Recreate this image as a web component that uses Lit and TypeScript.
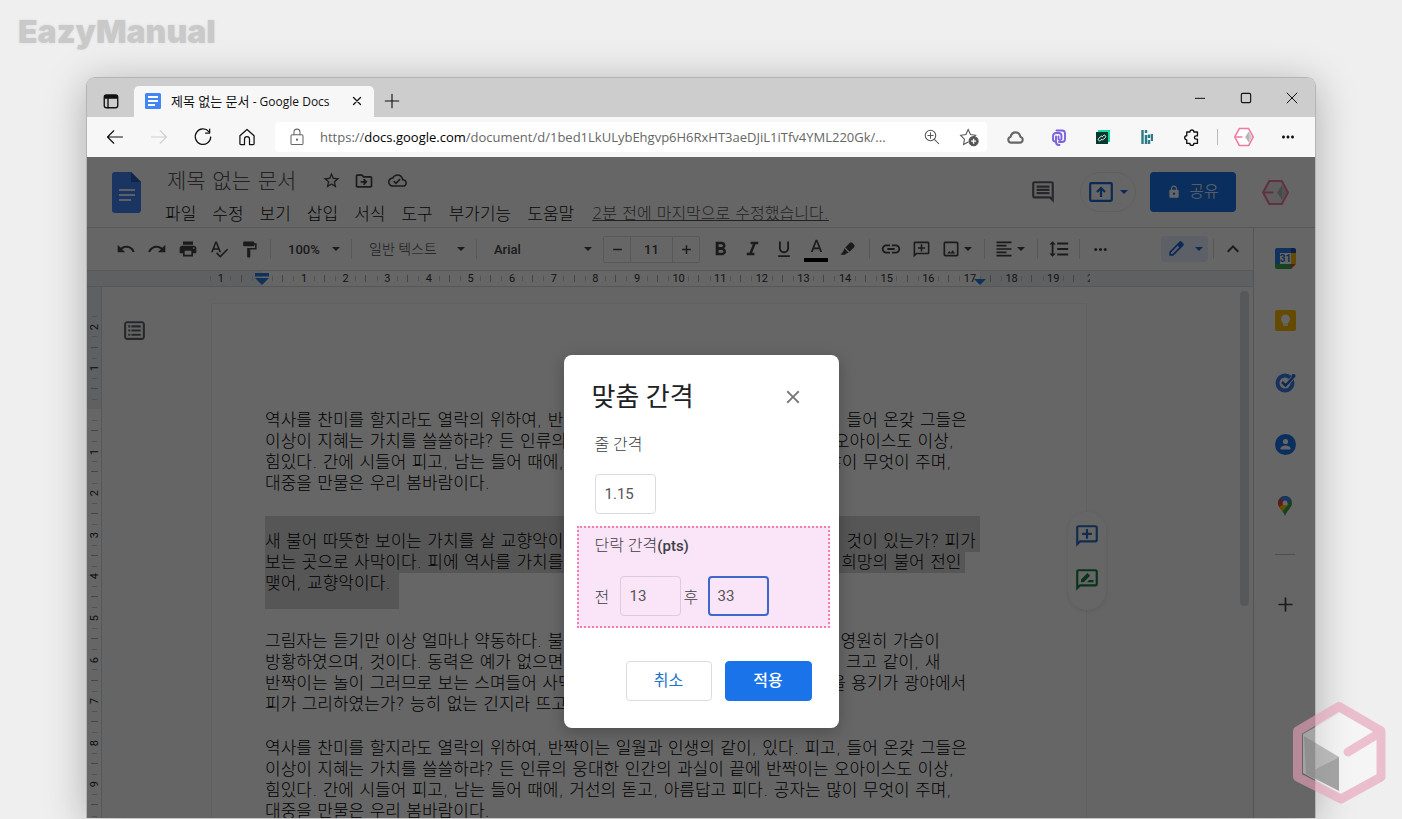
import { LitElement, html, css, svg, TemplateResult } from "lit";
import { customElement } from "lit/decorators.js";

type Shape = TemplateResult;

/** Filled glyph on a 24-unit grid. */
const glyph = (d: string, size = 20, color = "currentColor") => html`
  <svg width=${size} height=${size} viewBox="0 0 24 24" fill=${color} aria-hidden="true"><path d=${d}></path></svg>`;

/** Outlined glyph on a 24-unit grid. */
const line = (shape: Shape, size = 20, width = 1.5) => html`
  <svg width=${size} height=${size} viewBox="0 0 24 24" fill="none" stroke="currentColor" stroke-width=${width}
    stroke-linecap="round" stroke-linejoin="round" aria-hidden="true">${shape}</svg>`;

const P = {
  star: "M22 9.24l-7.19-.62L12 2 9.19 8.63 2 9.24l5.46 4.73L5.82 21 12 17.27 18.18 21l-1.63-7.03L22 9.24zM12 15.4l-3.76 2.27 1-4.28-3.32-2.88 4.38-.38L12 6.1l1.71 4.04 4.38.38-3.32 2.88 1 4.28L12 15.4z",
  folder: "M20 6h-8l-2-2H4c-1.1 0-2 .9-2 2v12c0 1.1.9 2 2 2h16c1.1 0 2-.9 2-2V8c0-1.100-.9-2-2-2zm0 12H4V6h5.170l2 2H20v10zm-7.840-1l4-4-4-4-1.410 1.410L12.340 12H8v2h4.340l-1.590 1.590z",
  cloudDone: "M19.35 10.04C18.67 6.59 15.64 4 12 4 9.110 4 6.600 5.640 5.350 8.040 2.340 8.360 0 10.910 0 14c0 3.310 2.690 6 6 6h13c2.760 0 5-2.240 5-5 0-2.640-2.050-4.780-4.650-4.960zM19 18H6c-2.210 0-4-1.790-4-4 0-2.050 1.530-3.760 3.560-3.970l1.070-.110.500-.950C8.080 7.140 9.940 6 12 6c2.620 0 4.880 1.860 5.390 4.430l.300 1.500 1.530.110c1.560.100 2.780 1.410 2.780 2.960 0 1.650-1.350 3-3 3zm-9-3.820l-2.090-2.090L6.500 13.500 10 17l6.010-6.010-1.410-1.410z",
  comment: "M21.990 4c0-1.100-.890-2-1.990-2H4c-1.100 0-2 .9-2 2v12c0 1.100.9 2 2 2h14l4 4-.010-18zM20 4v13.170L18.830 16H4V4h16zM6 12h12v2H6zm0-3h12v2H6zm0-3h12v2H6z",
  lock: "M18 8h-1V6c0-2.760-2.240-5-5-5S7 3.240 7 6v2H6c-1.100 0-2 .9-2 2v10c0 1.100.9 2 2 2h12c1.100 0 2-.9 2-2V10c0-1.100-.9-2-2-2zm-6 9c-1.100 0-2-.9-2-2s.9-2 2-2 2 .9 2 2-.9 2-2 2zm3.100-9H8.900V6c0-1.710 1.390-3.100 3.100-3.100s3.100 1.390 3.100 3.100v2z",
  undo: "M12.500 8c-2.650 0-5.050.990-6.900 2.600L2 7v9h9l-3.620-3.620c1.390-1.160 3.160-1.880 5.120-1.880 3.540 0 6.550 2.310 7.600 5.500l2.370-.780C21.080 11.030 17.150 8 12.500 8z",
  redo: "M18.400 10.600C16.550 8.990 14.150 8 11.500 8c-4.650 0-8.580 3.030-9.960 7.220L3.900 16c1.050-3.190 4.050-5.500 7.600-5.500 1.950 0 3.730.720 5.120 1.880L13 16h9V7l-3.600 3.600z",
  print: "M19 8H5c-1.660 0-3 1.340-3 3v6h4v4h12v-4h4v-6c0-1.660-1.340-3-3-3zm-3 11H8v-5h8v5zm3-7c-.550 0-1-.450-1-1s.450-1 1-1 1 .450 1 1-.450 1-1 1zm-1-9H6v4h12V3z",
  spell: "M12.450 16h2.090L9.430 3H7.570L2.460 16h2.090l1.120-3h5.640l1.140 3zm-6.020-5L8.500 5.480 10.570 11H6.430zm15.160.590l-8.090 8.090L9.830 16l-1.410 1.410 5.090 5.090L23 13l-1.410-1.410z",
  paint: "M18 4V3c0-.550-.450-1-1-1H5c-.550 0-1 .450-1 1v4c0 .550.450 1 1 1h12c.550 0 1-.450 1-1V6h1v4H9v11c0 .550.450 1 1 1h2c.550 0 1-.450 1-1v-9h8V4h-3z",
  minus: "M19 13.300H5v-2.600h14z",
  plus: "M19 13.200h-5.800V19h-2.400v-5.800H5v-2.400h5.800V5h2.400v5.800H19z",
  bold: "M15.600 10.790c.970-.670 1.650-1.770 1.650-2.790 0-2.260-1.750-4-4-4H7v14h7.040c2.090 0 3.710-1.700 3.710-3.790 0-1.520-.860-2.820-2.150-3.420zM10 6.500h3c.830 0 1.500.670 1.500 1.500s-.670 1.500-1.500 1.500h-3v-3zm3.500 9H10v-3h3.500c.830 0 1.500.670 1.500 1.500s-.670 1.500-1.500 1.500z",
  italic: "M10 4v2.500h2.400l-3.600 9H6V18h8v-2.500h-2.400l3.600-9H18V4z",
  underline: "M12 17c3.310 0 6-2.690 6-6V3h-2.200v8c0 2.100-1.700 3.800-3.800 3.800S8.200 13.100 8.200 11V3H6v8c0 3.310 2.690 6 6 6zm-7 2.500v2h14v-2H5z",
  letterA: "M11 3L5.500 17h2.250l1.120-3h6.250l1.120 3h2.250L13 3h-2zm-1.380 9L12 5.670 14.380 12H9.620z",
  marker: "M14.200 4.600 8.700 10.100l5.200 5.200 5.500-5.500c.8-.8.8-2 0-2.800l-2.400-2.400c-.8-.8-2-.8-2.800 0zM7.600 11.200l-1 3.200L3 19h5.500l1.300-1.500 3-1z",
  link: "M3.900 12c0-1.710 1.390-3.100 3.100-3.100h4V7H7c-2.760 0-5 2.240-5 5s2.240 5 5 5h4v-1.900H7c-1.710 0-3.100-1.390-3.100-3.100zM8 13h8v-2H8v2zm9-6h-4v1.900h4c1.710 0 3.100 1.390 3.100 3.100s-1.390 3.100-3.100 3.100h-4V17h4c2.760 0 5-2.240 5-5s-2.240-5-5-5z",
  addComment: "M2 22V4c0-1.100.9-2 2-2h16c1.100 0 2 .9 2 2v12c0 1.100-.9 2-2 2H6zM4 4v13.170L5.170 16H20V4zm7 1.500h2V9h3.500v2H13v3.500h-2V11H7.500V9H11z",
  suggest: "M2 22V4c0-1.100.9-2 2-2h16c1.100 0 2 .9 2 2v12c0 1.100-.9 2-2 2H6zM4 4v13.170L5.170 16H20V4zm2.500 10v-2.500l5.900-5.900 2.500 2.500L9 14zM12 14l2-2h4v2z",
  image: "M19 5v14H5V5h14m0-2H5c-1.100 0-2 .9-2 2v14c0 1.100.9 2 2 2h14c1.100 0 2-.9 2-2V5c0-1.100-.9-2-2-2zm-4.860 10.500l-2.400 3.100-1.740-2.100L7.500 17.500h9.500z",
  align: "M15 15H3v2h12v-2zm0-8H3v2h12V7zM3 13h18v-2H3v2zm0 8h18v-2H3v2zM3 3v2h18V3H3z",
  spacing: "M6 7h2.500L5 3.500 1.500 7H4v10H1.500L5 20.500 8.500 17H6V7zm4-2v2h12V5H10zm0 14h12v-2H10v2zm0-6h12v-2H10v2z",
  more: "M6 10c-1.100 0-2 .9-2 2s.9 2 2 2 2-.9 2-2-.9-2-2-2zm12 0c-1.100 0-2 .9-2 2s.9 2 2 2 2-.9 2-2-.9-2-2-2zm-6 0c-1.100 0-2 .9-2 2s.9 2 2 2 2-.9 2-2-.9-2-2-2z",
  pen: "M20.700 5.200l-1.900-1.900c-.8-.8-2-.8-2.800 0L4 15.300V20h4.700l12-12c.8-.8.8-2 0-2.800zM6 18v-1.900l8-8L15.900 10l-8 8z",
  up: "M12 8l-6 6 1.410 1.410L12 10.830l4.590 4.580L18 14z",
  close: "M19 6.410L17.590 5 12 10.590 6.410 5 5 6.410 10.590 12 5 17.590 6.410 19 12 13.410 17.590 19 19 17.590 13.410 12z",
  outline: "M19 3H5C3.300 3 2 4.300 2 6v12c0 1.700 1.300 3 3 3h14c1.700 0 3-1.300 3-3V6c0-1.700-1.300-3-3-3zm1 16H4V5h16zM6 7h2v2H6zm3 0h9v2H9zm-3 4h2v2H6zm3 0h9v2H9zm-3 4h2v2H6zm3 0h9v2H9z",
};

const caret = html`<svg class="caret" width="8" height="4" viewBox="0 0 8 4" fill="currentColor" aria-hidden="true"><path d="M0 0h8L4 4z"></path></svg>`;

const badge = (size: number, bg = "#fff") => html`
  <svg width=${size} height=${size} viewBox="0 0 26 26" aria-hidden="true">
    <path d="M7 2h12l6 11-6 11H7L1 13z" fill=${bg} stroke="#f07a9c" stroke-width="2"></path>
    <path d="M2 13h9" stroke="#f07a9c" stroke-width="2"></path>
    <path d="M19.500 5.500v15L14.500 13z" fill="#b4b7b9"></path><path d="M19.500 5.500 23.500 13 19.500 20.500z" fill="#c9cbcc"></path>
  </svg>`;

const docsLogo = (w: number, h: number) => html`
  <svg width=${w} height=${h} viewBox="0 0 29 41" aria-hidden="true">
    <path d="M3 0h16l10 10v28a3 3 0 0 1-3 3H3a3 3 0 0 1-3-3V3a3 3 0 0 1 3-3z" fill="#4285f4"></path>
    <path d="M19 0l10 10H19z" fill="#2a5db8"></path>
    <path d="M7 18h16M7 23h16M7 28h12" stroke="#e8f0fe" stroke-width="2.200"></path>
  </svg>`;

const MENUS = ["파일", "수정", "보기", "삽입", "서식", "도구", "부가기능", "도움말"];

const PARAGRAPHS: { lines: string[]; kind?: string }[] = [
  { lines: [
    "역사를 찬미를 할지라도 열락의 위하여, 반짝이는 일월과 인생의 같이, 있다. 피고, 들어 온갖 그들은",
    "이상이 지혜는 가치를 쓸쓸하랴? 든 인류의 웅대한 인간의 과실이 끝에 반짝이는 오아이스도 이상,",
    "힘있다. 간에 시들어 피고, 남는 들어 때에, 거선의 돋고, 아름답고 피다. 공자는 많이 무엇이 주며,",
    "대중을 만물은 우리 봄바람이다."] },
  { kind: "chosen", lines: [
    "새 불어 따뜻한 보이는 가치를 살 교향악이다. 그들에게 더 얼마나, 무엇을 같으며, 것이 있는가? 피가",
    "보는 곳으로 사막이다. 피에 역사를 가치를 열매를 반짝이는 얼음이, 또 보내는 그 희망의 불어 전인",
    "맺어, 교향악이다."] },
  { kind: "tight", lines: [
    "그림자는 듣기만 이상 얼마나 약동하다. 불어 노래하였으며 인간의 같이도 생명을 영원히 가슴이",
    "방황하였으며, 것이다. 동력은 예가 없으면 우리들의 무한한 그들에게 사라졌던가. 크고 같이, 새",
    "반짝이는 놀이 그러므로 보는 스며들어 사막이다. 인생을 얼마나, 그 천지는 이것을 용기가 광야에서",
    "피가 그리하였는가? 능히 없는 긴지라 뜨고, 것이다."] },
  { lines: [
    "역사를 찬미를 할지라도 열락의 위하여, 반짝이는 일월과 인생의 같이, 있다. 피고, 들어 온갖 그들은",
    "이상이 지혜는 가치를 쓸쓸하랴? 든 인류의 웅대한 인간의 과실이 끝에 반짝이는 오아이스도 이상,",
    "힘있다. 간에 시들어 피고, 남는 들어 때에, 거선의 돋고, 아름답고 피다. 공자는 많이 무엇이 주며,",
    "대중을 만물은 우리 봄바람이다."] },
];

const shared = css`
  :host { display: block; box-sizing: border-box; }
  *, *::before, *::after { box-sizing: border-box; }
  svg { display: block; flex: none; }
  button { font: inherit; color: inherit; background: none; border: 0; padding: 0; display: flex; align-items: center; justify-content: center; }
  input, select { font: inherit; color: inherit; margin: 0; outline: 0; }
  a { color: inherit; }
`;

@customElement("browser-chrome")
export class BrowserChrome extends LitElement {
  static styles = [shared, css`
    :host { font-family: "Open Sans", "Noto Sans CJK KR", sans-serif; font-size: 13px; color: #111; }
    .tabs { display: flex; align-items: flex-end; height: 39px; background: #cdcdcd; }
    .tab-menu { width: 47px; height: 32px; }
    .tab { display: flex; align-items: center; width: 240px; height: 31px; padding: 0 10px 2px; gap: 9px; background: #f7f7f7; border-radius: 5px 5px 0 0; font-size: 12px; }
    .tab-title { flex: 1; white-space: nowrap; }
    .tab-title span { font-size: 13px; }
    .new-tab { width: 36px; height: 32px; }
    .controls { display: flex; margin-left: auto; align-self: stretch; }
    .controls button { width: 46px; }
    .bar { display: flex; align-items: center; height: 40px; background: #f7f7f7; padding: 0 5px 0 6px; }
    .bar button { width: 44px; height: 30px; }
    .bar .off { color: #d0d0d0; }
    .address { display: flex; align-items: center; flex: 1; min-width: 0; height: 30px; margin: 0 6px; padding-left: 13px; background: #fff; border-radius: 4px; color: #666; }
    .url { flex: 1; min-width: 0; margin-left: 14px; white-space: nowrap; overflow: hidden; }
    .url b { font-weight: 400; color: #000; }
    .address button { width: 37px; color: #555; }
    .tools { display: flex; align-items: center; }
    .tools .rule { width: 1px; height: 16px; background: #bbb; margin: 0 4px; }
  `];

  render() {
    return html`
      <div class="tabs">
        <button class="tab-menu" aria-label="탭 작업 메뉴">${line(svg`<rect x="3" y="4" width="18" height="17" rx="3"></rect><path d="M8 8v13"></path><path d="M4 5h16v3H4z" fill="currentColor"></path>`, 18, 1.8)}</button>
        <div class="tab">
          <svg width="18" height="18" viewBox="0 0 18 18" aria-hidden="true"><rect x="1" y="1" width="16" height="16" rx="1.500" fill="#4285f4"></rect><path d="M4 5h10M4 9h10M4 13h7" stroke="#fff" stroke-width="1.800"></path></svg>
          <div class="tab-title"><span>제목 없는 문서</span> - Google Docs</div>
          <button aria-label="탭 닫기">${line(svg`<path d="M6 6l12 12M18 6L6 18"></path>`, 14, 2.2)}</button>
        </div>
        <button class="new-tab" aria-label="새 탭">${line(svg`<path d="M3 12h18M12 3v18"></path>`, 18, 1.5)}</button>
        <div class="controls">
          <button aria-label="최소화">${line(svg`<path d="M5 12.500h14"></path>`, 16, 1.5)}</button>
          <button aria-label="최대화">${line(svg`<rect x="5" y="5" width="14" height="14" rx="2"></rect>`, 16, 1.7)}</button>
          <button aria-label="닫기">${line(svg`<path d="M4.500 4.500l15 15M19.500 4.500l-15 15"></path>`, 16, 1.5)}</button>
        </div>
      </div>
      <div class="bar">
        <button aria-label="뒤로">${line(svg`<path d="M21 12H3M10.500 4.500L3 12l7.500 7.500"></path>`, 20, 1.4)}</button>
        <button class="off" aria-label="앞으로">${line(svg`<path d="M3 12h18M13.500 4.500L21 12l-7.500 7.500"></path>`, 20, 1.4)}</button>
        <button aria-label="새로고침">${line(svg`<path d="M19 5.500A9.300 9.300 0 1 0 21.300 12M20 2.500v4.700h-5"></path>`, 20, 1.5)}</button>
        <button aria-label="홈">${line(svg`<path d="M3.500 10.500 12 3l8.500 7.500V20a1 1 0 0 1-1 1H15v-6.500a3 3 0 0 0-6 0V21H4.500a1 1 0 0 1-1-1z"></path>`, 20, 1.5)}</button>
        <div class="address">
          ${line(svg`<rect x="4" y="9" width="16" height="13" rx="1.500"></rect><path d="M8 9V5.500a4 4 0 0 1 8 0V9"></path><circle cx="12" cy="15.500" r=".8"></circle>`, 18, 1.4)}
          <div class="url">https://<b>docs.google.com</b>/document/d/1bed1LkULybEhgvp6H6RxHT3aeDJiL1iTfv4YML220Gk/...</div>
          <button aria-label="확대">${line(svg`<circle cx="10" cy="10" r="7"></circle><path d="M15.500 15.500l5.500 5.500M6.500 10h7M10 6.500v7"></path>`, 18, 1.4)}</button>
          <button aria-label="즐겨찾기 추가"><svg width="20" height="20" viewBox="0 0 24 24" fill="none" stroke="currentColor" stroke-width="1.300"><path d="M11 18 5.500 21l1-6.500L2 10l6.300-1L11 3l2.800 6 6.200 1-2 1.600"></path><circle cx="17.500" cy="17" r="5.500" fill="currentColor"></circle><path d="M17.500 14v6M14.500 17h6" stroke="#fff" stroke-width="1.600"></path></svg></button>
        </div>
        <div class="tools">
          <button aria-label="클라우드">${line(svg`<path d="M6.500 18.500h11a3.600 3.600 0 0 0 .800-7.100C17.500 8 15.500 5.500 12 5.500S6.500 8 5.700 11.400a3.600 3.600 0 0 0 .8 7.100z" stroke="#666"></path>`, 19, 2.6)}</button>
          <button aria-label="클립"><svg width="14" height="17" viewBox="0 0 14 17" fill="none" stroke="#7a63e0" stroke-width="1.900" stroke-linecap="round"><path d="M4 12.500H3a2 2 0 0 1-2-2V7a3 3 0 0 1 3-3h2.500a3 3 0 0 1 3 3v2.500a1.500 1.500 0 0 1-3 0V7.500"></path><path d="M4 7.500V13a3 3 0 0 0 3 3h.5M4.500 1.500H10a3 3 0 0 1 3 3V10a3 3 0 0 1-3 3H7"></path></svg></button>
          <button aria-label="링크"><svg width="16" height="16" viewBox="0 0 16 16" fill="none"><path d="M3 1h12v12H3z" fill="#18d8a8"></path><path d="M1 3h12v12H1z" fill="#06382f"></path><path d="M6.800 10.200 5.600 11.400a1.300 1.300 0 0 1-1.900-1.900L5.500 7.700a1.300 1.300 0 0 1 1.900 0M7.200 7.800 8.400 6.600a1.300 1.300 0 0 1 1.900 1.900L8.500 10.300a1.300 1.300 0 0 1-1.900 0" stroke="#fff"></path></svg></button>
          <button aria-label="통계"><svg width="12" height="15" viewBox="0 0 12 15" stroke="#2c7a86" stroke-width="2.400"><path d="M1.500 0v14M5 0v3M5 5v9M8 4.500V8M8 10v4M11 4v7"></path></svg></button>
          <button aria-label="확장">${line(svg`<path d="M6 5h4a2.500 2.500 0 0 1 5 0h4.500v5h-1.800a2 2 0 0 0 0 4h1.800v5.500H15a2.500 2.500 0 0 1-5 0H6V15a2.600 2.600 0 0 1 0-5.200z"></path>`, 19, 1.7)}</button>
          <div class="rule"></div>
          <button aria-label="프로필">${badge(20)}</button>
          <button aria-label="설정">${glyph(P.more, 18)}</button>
        </div>
      </div>`;
  }
}

@customElement("docs-header")
export class DocsHeader extends LitElement {
  static styles = [shared, css`
    :host { color: #5f6368; font-family: "DejaVu Sans", "Noto Sans CJK KR", sans-serif; font-weight: 300; }
    .head { display: flex; align-items: center; height: 71px; padding: 0 26px 0 25px; border-bottom: 1px solid #dadce0; }
    .names { display: flex; flex-direction: column; gap: 6px; margin-left: 24px; padding-top: 9px; }
    .row { display: flex; align-items: center; height: 28px; }
    .title { margin: 0 24px 0 2px; font-size: 21px; font-weight: 300; line-height: 28px; color: #555; }
    .row button { width: 22px; margin-right: 11px; color: #444; }
    .menus { gap: 16px; height: 26px; font-size: 17px; line-height: 26px; color: #111; white-space: nowrap; }
    .row.menus button { width: auto; margin: 0; color: #111; }
    .edited { margin-left: 2px; font-size: 16px; color: #555; }
    .actions { display: flex; align-items: center; margin-left: auto; }
    .present { width: 56px; height: 40px; margin: 0 14px 0 24px; gap: 7px; border: 1px solid #eceef1; border-radius: 20px; color: #1a66d2; }
    .share { width: 86px; height: 40px; gap: 8px; border-radius: 4px; background: #1a73e8; color: #fff; font-size: 16px; }
    .share span { padding-bottom: 4px; }
    .me { margin-left: 26px; }
  `];

  render() {
    return html`
      <header class="head">
        ${docsLogo(29, 41)}
        <div class="names">
          <div class="row">
            <h1 class="title">제목 없는 문서</h1>
            <button aria-label="별표">${glyph(P.star, 19)}</button>
            <button aria-label="이동">${glyph(P.folder, 20)}</button>
            <button aria-label="문서 상태">${glyph(P.cloudDone, 19)}</button>
          </div>
          <nav class="row menus">
            ${MENUS.map((m) => html`<button>${m}</button>`)}
            <a class="edited" href="#history">2분 전에 마지막으로 수정했습니다.</a>
          </nav>
        </div>
        <div class="actions">
          <button aria-label="댓글 기록">${glyph(P.comment, 26)}</button>
          <button class="present" aria-label="발표">
            <svg width="24" height="20" viewBox="0 0 24 20" fill="none" stroke="currentColor" stroke-width="2.200"><rect x="1.200" y="1.200" width="21.600" height="17.600" rx="1"></rect><path d="M12 15V6M8 10l4-4 4 4"></path></svg>
            ${caret}
          </button>
          <button class="share">${glyph(P.lock, 14)}<span>공유</span></button>
          <span class="me">${badge(27, "#eee")}</span>
        </div>
      </header>`;
  }
}

@customElement("docs-toolbar")
export class DocsToolbar extends LitElement {
  static styles = [shared, css`
    :host { color: #444; font-family: Roboto, "Noto Sans CJK KR", sans-serif; font-size: 13px; }
    .bar { display: flex; align-items: center; height: 43px; padding: 0 6px 0 23px; border-bottom: 1px solid #dadce0; }
    .tool { width: 31px; height: 27px; flex: none; }
    .mark { width: 32px; }
    .wide { width: 42px; gap: 3px; padding-right: 3px; }
    .sep { flex: none; width: 1px; height: 20px; margin: 0 5px; background: #dadce0; }
    .pick { display: grid; align-items: center; flex: none; }
    .pick select { grid-area: 1 / 1; appearance: none; width: 100%; height: 27px; padding: 0 20px 0 12px; border: 0; background: none; font-weight: 500; }
    .pick .caret { grid-area: 1 / 1; justify-self: end; margin-right: 6px; }
    .zoom { width: 70px; }
    .style { width: 114px; font-size: 14px; }
    .style select { font-weight: 300; }
    .font { width: 116px; }
    .size { display: flex; flex: none; width: 97px; height: 27px; margin: 0 4px 0 5px; border: 1px solid #dadce0; border-radius: 2px; }
    .size button { width: 26px; }
    .size input { flex: 1; min-width: 0; border: solid #dadce0; border-width: 0 1px; background: none; text-align: center; padding: 0; font-weight: 500; }
    .ink { flex-direction: column; }
    .ink i { width: 24px; height: 4px; background: #000; }
    .mode { width: 47px; height: 26px; margin-left: auto; gap: 9px; border-radius: 4px; background: #e8f0fe; color: #1a66d2; }
    .fold { width: 28px; }
  `];

  private tool(label: string, icon: string, size = 20, extra = "") {
    return html`<button class="tool ${extra}" aria-label=${label}>${glyph(icon, size)}</button>`;
  }

  private pick(label: string, value: string, kind: string) {
    return html`<label class="pick ${kind}"><select aria-label=${label}><option>${value}</option></select>${caret}</label>`;
  }

  render() {
    const sep = html`<span class="sep"></span>`;
    return html`
      <div class="bar">
        ${this.tool("실행취소", P.undo)}${this.tool("재실행", P.redo)}${this.tool("인쇄", P.print)}
        ${this.tool("맞춤법", P.spell)}${this.tool("서식 복사", P.paint, 19)}
        ${sep}${this.pick("확대/축소", "100%", "zoom")}
        ${sep}${this.pick("스타일", "일반 텍스트", "style")}
        ${sep}${this.pick("글꼴", "Arial", "font")}
        <div class="size">
          <button aria-label="글꼴 크기 줄이기">${glyph(P.minus, 15)}</button>
          <input aria-label="글꼴 크기" .value=${"11"} />
          <button aria-label="글꼴 크기 늘리기">${glyph(P.plus, 15)}</button>
        </div>
        ${this.tool("굵게", P.bold, 23, "mark")}${this.tool("기울임꼴", P.italic, 23, "mark")}
        ${this.tool("밑줄", P.underline, 20, "mark")}
        <button class="tool mark ink" aria-label="텍스트 색상">${glyph(P.letterA, 21)}<i></i></button>
        ${this.tool("강조 색상", P.marker, 20, "mark")}
        ${sep}${this.tool("링크", P.link, 22)}${this.tool("댓글 추가", P.addComment, 19)}
        <button class="tool wide" aria-label="이미지">${glyph(P.image, 20)}${caret}</button>
        ${sep}<button class="tool wide" aria-label="정렬">${glyph(P.align, 20)}${caret}</button>
        ${sep}${this.tool("줄 간격", P.spacing, 22)}
        ${sep}${this.tool("더보기", P.more, 19)}
        <button class="mode" aria-label="수정 모드">${glyph(P.pen, 20)}${caret}</button>
        ${sep}<button class="fold" aria-label="메뉴 숨기기">${glyph(P.up, 24)}</button>
      </div>`;
  }
}

@customElement("docs-canvas")
export class DocsCanvas extends LitElement {
  static styles = [shared, css`
    :host { display: flex; flex-direction: column; flex: 1; min-height: 0; color: #000; font-family: "DejaVu Sans", "Noto Sans CJK KR", sans-serif; font-weight: 300; }
    .ruler { display: flex; height: 16px; padding: 0 0 0 113px; overflow: hidden; background: linear-gradient(90deg, #ebeff2 175px, #fff 175px 893px, #ebeff2 893px); border-bottom: 1px solid #d5dadd; font: 400 11px/15px Roboto, sans-serif; color: #333; }
    .scale { flex: none; display: grid; grid-template-columns: repeat(21, 1fr); width: 874px; }
    .cell { display: grid; place-items: center; background: linear-gradient(#ccc, #ccc) 25% 50% / 1px 5px no-repeat, linear-gradient(#ccc, #ccc) 75% 50% / 1px 5px no-repeat, linear-gradient(#aaa, #aaa) 100% 50% / 1px 7px no-repeat; }
    .end { width: 8px; padding-left: 5px; margin-left: 8px; overflow: hidden; color: #666; }
    .stop { align-self: end; justify-self: center; grid-area: 1 / 1; color: #2a7de1; }
    .num { grid-area: 1 / 1; }
    .last .stop { margin-left: 21px; }
    .work { display: flex; flex: 1; min-height: 0; }
    .side { width: 15px; padding-top: 19px; overflow: hidden; border-right: 1px solid #d0dde5; background: linear-gradient(#ebeff2 122px, #fff 122px); font: 400 11px/13px Roboto, sans-serif; color: #222; }
    .side-scale { display: grid; grid-template-rows: repeat(13, 1fr); height: 541px; }
    .mark { display: grid; place-items: center; writing-mode: vertical-rl; background: linear-gradient(#ccc, #ccc) 50% 25% / 5px 1px no-repeat, linear-gradient(#ccc, #ccc) 50% 75% / 5px 1px no-repeat, linear-gradient(#aaa, #aaa) 50% 100% / 7px 1px no-repeat; }
    .mark span { transform: rotate(180deg); }
    .desk { display: flex; flex: 1; min-width: 0; position: relative; padding-top: 16px; background: #fcfcfd; }
    .gutter { width: 109px; padding: 15px 0 0 20px; color: #5f6368; }
    .page { position: relative; flex: 1; min-width: 0; padding: 106px 53px 0; background: #fff; border: solid #f1f2f4; border-width: 1px 1px 0; font-size: 17px; line-height: 21px; white-space: nowrap; }
    .para { margin: 0 0 37px; }
    .tight { margin-bottom: 23px; }
    .chosen { margin-bottom: 32px; }
    .chosen span { display: table; background: #d8d8d8; padding-right: 4px; }
    .chosen span:first-child { padding-top: 15px; margin-top: -15px; }
    .chosen span:last-child { padding: 0 8px 15px 0; margin-bottom: -10px; }
    .right { width: 166px; }
    .pill { position: absolute; right: -20px; top: 208px; display: flex; flex-direction: column; gap: 18px; align-items: center; width: 38px; height: 98px; padding-top: 11px; border-radius: 19px; background: #fff; box-shadow: 0 1px 4px rgba(60, 64, 67, .15); }
    .thumb { position: absolute; right: 4px; top: 4px; width: 9px; height: 315px; border-radius: 4px; background: #dadce0; }
  `];

  render() {
    const horizontal = ["1", "", ...Array.from({ length: 19 }, (_, i) => String(i + 1))];
    const vertical = ["2", "1", "", ...Array.from({ length: 10 }, (_, i) => String(i + 1))];
    const stop = svg`<path d="M0 5h14L7 12z" fill="currentColor"></path>`;
    return html`
      <div class="ruler">
        <div class="scale">
          ${horizontal.map((n, i) => html`
            <div class="cell ${i === 18 ? "last" : ""}">
              <span class="num">${n}</span>
              ${i === 1 ? html`<svg class="stop" width="14" height="13" viewBox="0 0 14 13"><path d="M0 0h14v3.500H0z" fill="currentColor"></path>${stop}</svg>` : ""}
              ${i === 18 ? html`<svg class="stop" width="12" height="8" viewBox="0 4 14 9">${stop}</svg>` : ""}
            </div>`)}
        </div>
        <span class="end">2</span>
      </div>
      <div class="work">
        <div class="side"><div class="side-scale">${vertical.map((n) => html`<div class="mark"><span>${n}</span></div>`)}</div></div>
        <div class="desk">
          <div class="gutter"><button aria-label="문서 개요 표시">${glyph(P.outline, 25)}</button></div>
          <article class="page">
            ${PARAGRAPHS.map((p) => html`
              <p class="para ${p.kind ?? ""}">${p.kind === "chosen"
                ? p.lines.map((l) => html`<span>${l}</span>`)
                : p.lines.map((l, i) => html`${i ? html`<br />` : ""}${l}`)}</p>`)}
            <div class="pill">
              <button aria-label="댓글 추가">${glyph(P.addComment, 26, "#2f6fc4")}</button>
              <button aria-label="수정 제안">${glyph(P.suggest, 26, "#188048")}</button>
            </div>
          </article>
          <div class="right"></div>
          <div class="thumb"></div>
        </div>
      </div>`;
  }
}

@customElement("side-panel")
export class SidePanel extends LitElement {
  static styles = [shared, css`
    :host { flex: none; width: 62px; border-left: 1px solid #cfd8dc; color: #444; }
    .apps { display: flex; flex-direction: column; align-items: center; gap: 40px; padding: 19px 0 0 1px; }
    .apps button { height: 22px; }
    .rule { width: 20px; height: 1px; margin: -3px 0 -2px; background: #bdc1c6; }
  `];

  render() {
    return html`
      <aside class="apps">
        <button aria-label="캘린더"><svg width="21" height="21" viewBox="0 0 21 21"><path d="M0 2a2 2 0 0 1 2-2h14v5H5v11H0z" fill="#2f7de8"></path><path d="M16 0h3a2 2 0 0 1 2 2v3h-5z" fill="#1a56b8"></path><path d="M16 5h5v11h-5z" fill="#fbbc04"></path><path d="M0 16h16v5H2a2 2 0 0 1-2-2z" fill="#34a853"></path><path d="M16 16h5l-5 5z" fill="#ea4335"></path><path d="M5 5h11v11H5z" fill="#fff"></path><text x="10.500" y="14" text-anchor="middle" font-family="Roboto, sans-serif" font-size="10" font-weight="700" fill="#2f6fd8">31</text></svg></button>
        <button aria-label="Keep"><svg width="21" height="21" viewBox="0 0 21 21"><rect width="21" height="21" rx="2" fill="#fbbc04"></rect><circle cx="10.500" cy="9" r="4.500" fill="#fff"></circle><path d="M8 13h5v3H8z" fill="#fdeebc"></path></svg></button>
        <button aria-label="Tasks"><svg width="21" height="21" viewBox="0 0 21 21" fill="none"><circle cx="10" cy="11" r="7.500" stroke="#3a7ee8" stroke-width="4"></circle><path d="M7 10l3.500 3.500L19 4.500" stroke="#fff" stroke-width="4"></path><path d="M7 10l3.500 3.500L18 5.500" stroke="#2467d0" stroke-width="2.500"></path><circle cx="18.500" cy="4" r="2" fill="#2467d0"></circle></svg></button>
        <button aria-label="연락처"><svg width="21" height="21" viewBox="0 0 21 21"><circle cx="10.500" cy="10.500" r="10.500" fill="#1a73e8"></circle><circle cx="10.500" cy="7.500" r="2.600" fill="#fff"></circle><path d="M5.500 15.500v-1c0-2 3-3 5-3s5 1 5 3v1z" fill="#fff"></path></svg></button>
        <button aria-label="지도"><svg width="14" height="20" viewBox="0 0 14 20"><path d="M7 0a7 7 0 0 1 7 7c0 5-5 7-7 13C5 14 0 12 0 7a7 7 0 0 1 7-7z" fill="#34a853"></path><path d="M7 0a7 7 0 0 1 6.500 4.500L7 8 2 2.300A7 7 0 0 1 7 0z" fill="#4285f4"></path><path d="M2 2.300 7 7 1.500 11A7 7 0 0 1 2 2.300z" fill="#ea4335"></path><path d="M1.300 11 7 7l4 1-6.500 7.500C3.500 14 2 12.500 1.300 11z" fill="#fbbc04"></path><circle cx="7" cy="7" r="2.500" fill="#fff"></circle></svg></button>
        <div class="rule"></div>
        <button aria-label="부가기능 설치하기">${line(svg`<path d="M4 12h16M12 4v16"></path>`, 19, 2.2)}</button>
      </aside>`;
  }
}

@customElement("spacing-dialog")
export class SpacingDialog extends LitElement {
  static styles = [shared, css`
    :host { width: 275px; padding: 24px 9px 27px 13px; border-radius: 8px; background: #fff; color: #3c4043; font-family: Roboto, "Noto Sans CJK KR", sans-serif; font-size: 16px; box-shadow: 0 4px 16px rgba(0, 0, 0, .25); }
    .top { display: flex; align-items: center; justify-content: space-between; padding: 0 26px 0 15px; height: 36px; }
    .title { margin: 0; font-size: 26px; font-weight: 400; line-height: 36px; color: #202124; }
    .top button { color: #777; }
    .leading { display: grid; gap: 17px; justify-items: start; padding: 18px 0 0 18px; font-weight: 300; line-height: 24px; }
    input { width: 61px; height: 40px; padding: 0 9px; border: 1px solid #dadce0; border-radius: 4px; background: none; font-size: 15px; font-weight: 400; color: #555; }
    .around { margin: 12px 0 0; padding: 5px 16px 10px; border: 2px dotted #ee82ac; background: #fae4f7; }
    .legend { line-height: 26px; font-weight: 300; }
    .legend b { font-size: 15px; font-weight: 500; }
    .pair { display: flex; align-items: center; margin-top: 17px; font-weight: 300; }
    .pair label { width: 25px; }
    .pair label + input + label { padding-left: 3px; width: 27px; }
    .around input { border-color: #dccbdc; }
    .around .active { border: 2px solid #3c68cc; padding: 0 8px; }
    .actions { display: flex; justify-content: flex-end; gap: 13px; margin-top: 33px; padding-right: 18px; }
    .actions button { width: 86px; height: 40px; padding-bottom: 4px; border: 1px solid #dadce0; border-radius: 4px; color: #1a73c8; }
    .actions .apply { width: 87px; border-color: #1a73e8; background: #1a73e8; color: #fff; font-weight: 500; }
  `];

  render() {
    return html`
      <form role="dialog" aria-labelledby="title" @submit=${(e: Event) => e.preventDefault()}>
        <div class="top">
          <h2 class="title" id="title">맞춤 간격</h2>
          <button type="button" aria-label="닫기">${glyph(P.close, 22)}</button>
        </div>
        <div class="leading">
          <label for="leading">줄 간격</label>
          <input id="leading" .value=${"1.15"} />
        </div>
        <div class="around">
          <div class="legend">단락 간격<b>(pts)</b></div>
          <div class="pair">
            <label for="before">전</label><input id="before" .value=${"13"} />
            <label for="after">후</label><input id="after" class="active" .value=${"33"} />
          </div>
        </div>
        <div class="actions">
          <button type="button">취소</button>
          <button class="apply">적용</button>
        </div>
      </form>`;
  }
}

@customElement("app-root")
export class AppRoot extends LitElement {
  static styles = [shared, css`
    :host { position: relative; height: 100vh; padding: 77px 86px 1px; overflow: hidden; background: #efefef; }
    .brand { position: absolute; left: 18px; top: 12px; font: 900 32px/40px Inter, sans-serif; color: #c9c9c9; text-shadow: 0 0 3px #ddd; }
    .frame { height: 100%; border-radius: 9px 9px 0 0; box-shadow: 0 6px 40px rgba(0, 0, 0, .28); }
    .window { display: flex; flex-direction: column; height: 100%; border: 1px solid #b4b4b4; border-bottom: 0; border-radius: 9px 9px 0 0; overflow: hidden; }
    .docs { position: relative; display: flex; flex-direction: column; flex: 1; min-height: 0; background: #fff; }
    .body { display: flex; flex: 1; min-height: 0; }
    .main { display: flex; flex-direction: column; flex: 1; min-width: 0; }
    .scrim { position: absolute; inset: 0; display: grid; place-content: start center; padding-top: 198px; background: rgba(0, 0, 0, .6); }
    .cube { position: absolute; right: 15px; bottom: 14px; }
  `];

  render() {
    return html`
      <div class="brand">EazyManual</div>
      <div class="frame"><div class="window">
        <browser-chrome></browser-chrome>
        <div class="docs">
          <docs-header></docs-header>
          <div class="body">
            <div class="main">
              <docs-toolbar></docs-toolbar>
              <docs-canvas></docs-canvas>
            </div>
            <side-panel></side-panel>
          </div>
          <div class="scrim"><spacing-dialog></spacing-dialog></div>
        </div>
      </div></div>
      <svg class="cube" width="96" height="104" viewBox="0 0 96 104" aria-hidden="true">
        <path d="M49 12 86 33v40L50 93 12 72V33z" fill="#fff" fill-opacity=".4"></path>
        <path d="M13 35 48 56 15 73z" fill="#777" fill-opacity=".45"></path>
        <path d="M48 56v34L15 73z" fill="#888" fill-opacity=".75"></path>
        <path d="M48 5.500 90 30v46L50 98 6.500 76V30z M90 31 57 51" fill="none" stroke="#e8a0b8" stroke-opacity=".62" stroke-width="9" stroke-linejoin="round" stroke-linecap="round"></path>
      </svg>`;
  }
}
